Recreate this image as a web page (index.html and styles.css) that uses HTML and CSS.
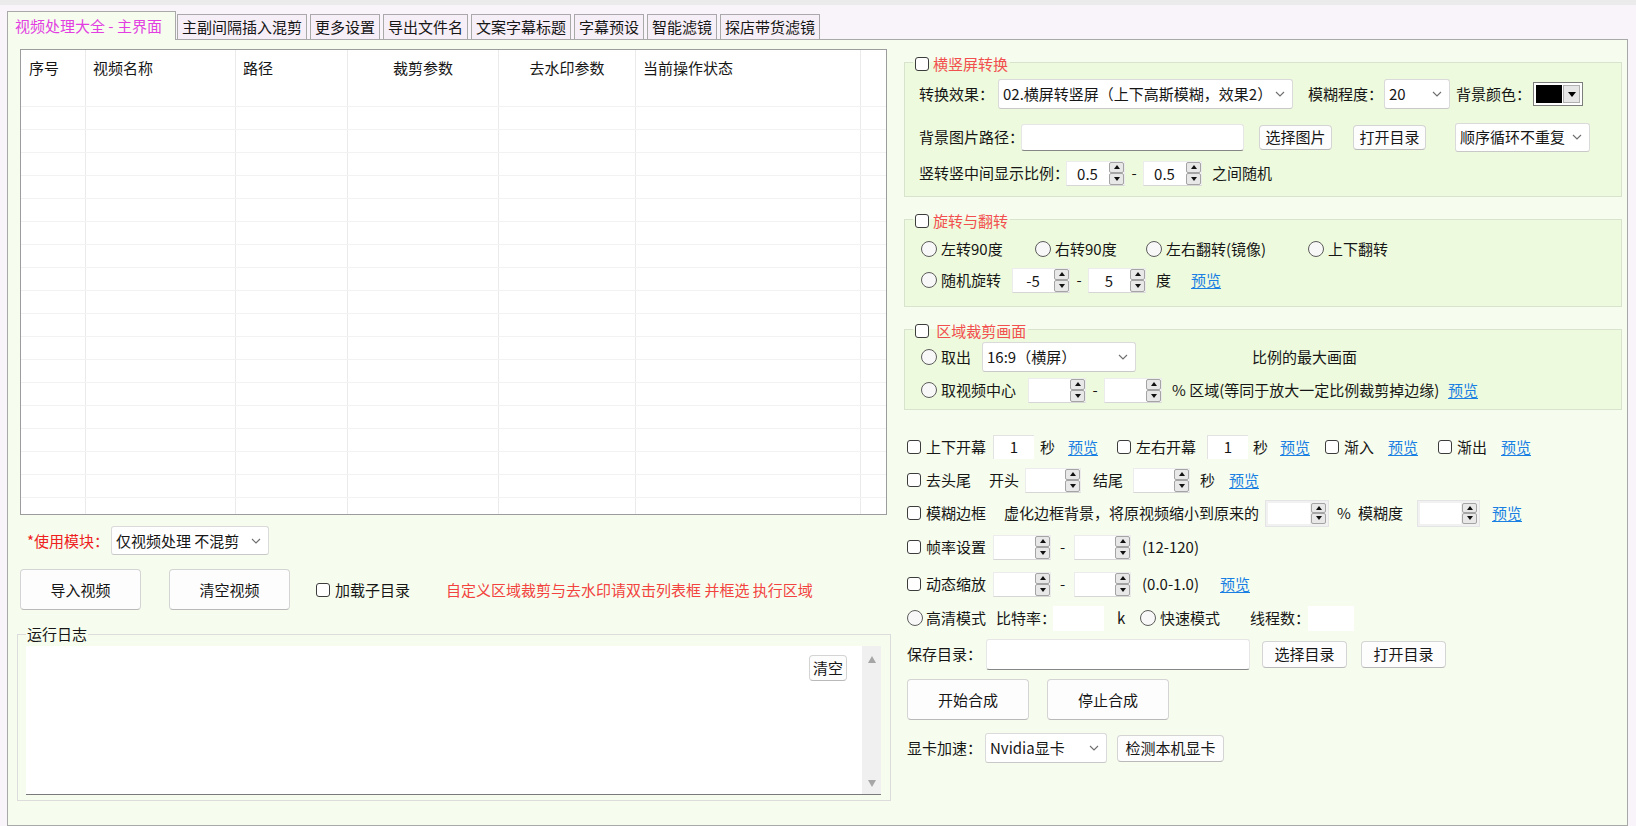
FILE: index.html
```html
<!DOCTYPE html>
<html lang="zh-CN">
<head>
<meta charset="utf-8">
<title>视频处理大全 - 主界面</title>
<link rel="stylesheet" href="styles.css">
</head>
<body>
<div class="topband"></div>
<div class="tabstrip">
  <div class="tab active">视频处理大全 - 主界面</div>
  <div class="tab">主副间隔插入混剪</div>
  <div class="tab">更多设置</div>
  <div class="tab">导出文件名</div>
  <div class="tab">文案字幕标题</div>
  <div class="tab">字幕预设</div>
  <div class="tab">智能滤镜</div>
  <div class="tab">探店带货滤镜</div>
</div>
<div class="panel">
  <div class="leftcol">
    <div class="grid">
      <div class="grow ghead"><span>序号</span><span>视频名称</span><span>路径</span><span class="c">裁剪参数</span><span class="c">去水印参数</span><span>当前操作状态</span><span></span></div>
      <div class="grow"><span></span><span></span><span></span><span></span><span></span><span></span><span></span></div>
      <div class="grow"><span></span><span></span><span></span><span></span><span></span><span></span><span></span></div>
      <div class="grow"><span></span><span></span><span></span><span></span><span></span><span></span><span></span></div>
      <div class="grow"><span></span><span></span><span></span><span></span><span></span><span></span><span></span></div>
      <div class="grow"><span></span><span></span><span></span><span></span><span></span><span></span><span></span></div>
      <div class="grow"><span></span><span></span><span></span><span></span><span></span><span></span><span></span></div>
      <div class="grow"><span></span><span></span><span></span><span></span><span></span><span></span><span></span></div>
      <div class="grow"><span></span><span></span><span></span><span></span><span></span><span></span><span></span></div>
      <div class="grow"><span></span><span></span><span></span><span></span><span></span><span></span><span></span></div>
      <div class="grow"><span></span><span></span><span></span><span></span><span></span><span></span><span></span></div>
      <div class="grow"><span></span><span></span><span></span><span></span><span></span><span></span><span></span></div>
      <div class="grow"><span></span><span></span><span></span><span></span><span></span><span></span><span></span></div>
      <div class="grow"><span></span><span></span><span></span><span></span><span></span><span></span><span></span></div>
      <div class="grow"><span></span><span></span><span></span><span></span><span></span><span></span><span></span></div>
      <div class="grow"><span></span><span></span><span></span><span></span><span></span><span></span><span></span></div>
      <div class="grow"><span></span><span></span><span></span><span></span><span></span><span></span><span></span></div>
      <div class="grow"><span></span><span></span><span></span><span></span><span></span><span></span><span></span></div>
      <div class="grow"><span></span><span></span><span></span><span></span><span></span><span></span><span></span></div>
    </div>

    <div class="modrow">
      <span class="lbl red w84">*使用模块：</span>
      <span class="sel w158 h29 modsel"><span>仅视频处理 不混剪</span><svg class="chev" viewBox="0 0 10 6"><polyline points="1,1 5,5 9,1"/></svg></span>
    </div>

    <div class="btnrow">
      <span class="btn big ml3">导入视频</span>
      <span class="btn big ml28">清空视频</span>
      <span class="copt ml26"><i class="cb"></i>加载子目录</span>
      <span class="hint ml36">自定义区域裁剪与去水印请双击列表框 并框选 执行区域</span>
    </div>

    <fieldset class="logset">
      <legend class="loglegend">运行日志</legend>
      <div class="logbox">
        <div class="logarea"><span class="btn clr">清空</span></div>
        <div class="vscroll"><i class="sup"></i><i class="sdn"></i></div>
      </div>
    </fieldset>
  </div>

  <div class="rightcol">
    <fieldset class="grp g1">
      <legend class="glegend"><span class="gin"><i class="cb"></i><span class="gtitle">横竖屏转换</span></span></legend>
      <div class="row h30 pl14 mt7">
        <span class="lbl w79">转换效果：</span>
        <span class="sel w295 h30"><span>02.横屏转竖屏（上下高斯模糊，效果2）</span><svg class="chev" viewBox="0 0 10 6"><polyline points="1,1 5,5 9,1"/></svg></span>
        <span class="lbl ml15 w76">模糊程度：</span>
        <span class="sel w66 h30"><span>20</span><svg class="chev" viewBox="0 0 10 6"><polyline points="1,1 5,5 9,1"/></svg></span>
        <span class="lbl ml6 w77">背景颜色：</span>
        <span class="cpick"><i class="swatch"></i><i class="cdrop"><b class="tri"></b></i></span>
      </div>
      <div class="row h30 pl14 mt13">
        <span class="lbl w102">背景图片路径：</span>
        <span class="inp line w223 h27"></span>
        <span class="btn ml15 w73 h25">选择图片</span>
        <span class="btn ml21 w73 h25">打开目录</span>
        <span class="sel ml29 w135 h29"><span>顺序循环不重复</span><svg class="chev" viewBox="0 0 10 6"><polyline points="1,1 5,5 9,1"/></svg></span>
      </div>
      <div class="row h26 pl14 mt8">
        <span class="lbl w147">竖转竖中间显示比例：</span>
        <span class="spin w59"><span class="sv">0.5</span><span class="sb"><i class="u"></i><i class="d"></i></span></span>
        <span class="sep w18">-</span>
        <span class="spin w59"><span class="sv">0.5</span><span class="sb"><i class="u"></i><i class="d"></i></span></span>
        <span class="lbl ml10">之间随机</span>
      </div>
    </fieldset>

    <fieldset class="grp g2">
      <legend class="glegend"><span class="gin"><i class="cb"></i><span class="gtitle">旋转与翻转</span></span></legend>
      <div class="row h26 pl16 mt7">
        <span class="ropt w114"><i class="rd"></i>左转90度</span>
        <span class="ropt w111"><i class="rd"></i>右转90度</span>
        <span class="ropt w162"><i class="rd"></i>左右翻转(镜像)</span>
        <span class="ropt"><i class="rd"></i>上下翻转</span>
      </div>
      <div class="row h26 pl16 mt5">
        <span class="ropt w91"><i class="rd"></i>随机旋转</span>
        <span class="spin w58"><span class="sv">-5</span><span class="sb"><i class="u"></i><i class="d"></i></span></span>
        <span class="sep w18">-</span>
        <span class="spin w58"><span class="sv">5</span><span class="sb"><i class="u"></i><i class="d"></i></span></span>
        <span class="lbl ml10">度</span>
        <span class="lnk ml20">预览</span>
      </div>
    </fieldset>

    <fieldset class="grp g3">
      <legend class="glegend"><span class="gin"><i class="cb"></i><span class="gtitle"> 区域裁剪画面</span></span></legend>
      <div class="row h30 pl16 mt3">
        <span class="ropt w61"><i class="rd"></i>取出</span>
        <span class="sel w154 h30"><span>16:9（横屏）</span><svg class="chev" viewBox="0 0 10 6"><polyline points="1,1 5,5 9,1"/></svg></span>
        <span class="lbl ml116">比例的最大画面</span>
      </div>
      <div class="row h26 pl16 mt5">
        <span class="ropt w107"><i class="rd"></i>取视频中心</span>
        <span class="spin w58"><span class="sv"></span><span class="sb"><i class="u"></i><i class="d"></i></span></span>
        <span class="sep w18">-</span>
        <span class="spin w58"><span class="sv"></span><span class="sb"><i class="u"></i><i class="d"></i></span></span>
        <span class="lbl ml10 w276">% 区域(等同于放大一定比例裁剪掉边缘)</span>
        <span class="lnk">预览</span>
      </div>
    </fieldset>

    <div class="row h26 pl3 mt24">
      <span class="copt w79"><i class="cb"></i>上下开幕</span>
      <span class="inp box ml7 w41 h24">1</span>
      <span class="lbl ml6 w15">秒</span>
      <span class="lnk ml13 w30">预览</span>
      <span class="copt ml19 w90"><i class="cb"></i>左右开幕</span>
      <span class="inp box w41 h24">1</span>
      <span class="lbl ml5 w15">秒</span>
      <span class="lnk ml12 w30">预览</span>
      <span class="copt ml15 w63"><i class="cb"></i>渐入</span>
      <span class="lnk w30">预览</span>
      <span class="copt ml20 w63"><i class="cb"></i>渐出</span>
      <span class="lnk">预览</span>
    </div>

    <div class="row h26 pl3 mt7">
      <span class="copt w82"><i class="cb"></i>去头尾</span>
      <span class="lbl w36">开头</span>
      <span class="spin w56"><span class="sv"></span><span class="sb"><i class="u"></i><i class="d"></i></span></span>
      <span class="lbl ml12 w40">结尾</span>
      <span class="spin w57"><span class="sv"></span><span class="sb"><i class="u"></i><i class="d"></i></span></span>
      <span class="lbl ml10 w29">秒</span>
      <span class="lnk">预览</span>
    </div>

    <div class="row h28 pl3 mt6">
      <span class="copt w97"><i class="cb"></i>模糊边框</span>
      <span class="lbl w261">虚化边框背景，将原视频缩小到原来的</span>
      <span class="spin framed w64"><span class="sv"></span><span class="sb"><i class="u"></i><i class="d"></i></span></span>
      <span class="lbl ml8 w21">%</span>
      <span class="lbl w59">模糊度</span>
      <span class="spin framed w63"><span class="sv"></span><span class="sb"><i class="u"></i><i class="d"></i></span></span>
      <span class="lnk ml12">预览</span>
    </div>

    <div class="row h26 pl3 mt7">
      <span class="copt w86"><i class="cb"></i>帧率设置</span>
      <span class="spin w58"><span class="sv"></span><span class="sb"><i class="u"></i><i class="d"></i></span></span>
      <span class="sep w23">-</span>
      <span class="spin w57"><span class="sv"></span><span class="sb"><i class="u"></i><i class="d"></i></span></span>
      <span class="lbl ml11">(12-120)</span>
    </div>

    <div class="row h26 pl3 mt11">
      <span class="copt w86"><i class="cb"></i>动态缩放</span>
      <span class="spin w58"><span class="sv"></span><span class="sb"><i class="u"></i><i class="d"></i></span></span>
      <span class="sep w23">-</span>
      <span class="spin w57"><span class="sv"></span><span class="sb"><i class="u"></i><i class="d"></i></span></span>
      <span class="lbl ml11 w78">(0.0-1.0)</span>
      <span class="lnk">预览</span>
    </div>

    <div class="row h26 pl3 mt8">
      <span class="ropt w89 g3px"><i class="rd"></i>高清模式</span>
      <span class="lbl w57">比特率：</span>
      <span class="inp w51 h25"></span>
      <span class="lbl ml13 w23">k</span>
      <span class="ropt w110"><i class="rd"></i>快速模式</span>
      <span class="lbl w58">线程数：</span>
      <span class="inp w46 h25"></span>
    </div>

    <div class="row h32 pl3 mt7">
      <span class="lbl w79">保存目录：</span>
      <span class="inp line w264 h31"></span>
      <span class="btn ml12 w85 h27">选择目录</span>
      <span class="btn ml14 w85 h27">打开目录</span>
    </div>

    <div class="row h41 pl3 mt9">
      <span class="btn w122 h41">开始合成</span>
      <span class="btn ml18 w122 h41">停止合成</span>
    </div>

    <div class="row h30 pl3 mt13">
      <span class="lbl w78">显卡加速：</span>
      <span class="sel w122 h30"><span>Nvidia显卡</span><svg class="chev" viewBox="0 0 10 6"><polyline points="1,1 5,5 9,1"/></svg></span>
      <span class="btn ml10 w107 h27">检测本机显卡</span>
    </div>
  </div>
</div>
</body>
</html>
```

FILE: styles.css
```css
* { box-sizing: border-box; }
html, body { margin: 0; padding: 0; }
body {
  width: 1636px;
  height: 826px;
  overflow: hidden;
  background: #f9f4fa;
  font-family: "Noto Sans CJK SC", "Noto Sans", sans-serif;
  font-size: 15px;
  line-height: 20px;
  color: #161616;
}

.topband { height: 5px; background: #ebebeb; }

.tabstrip {
  height: 35px;
  margin-bottom: -1px;
  padding-left: 7px;
  display: flex;
  align-items: flex-end;
}
.tab {
  height: 25px;
  margin: 0 0 1px 3px;
  padding: 0 4px;
  border: 1px solid #a9a9a9;
  border-bottom: none;
  background: #f6eff7;
  line-height: 23px;
  white-space: nowrap;
}
.tab.active {
  position: relative;
  z-index: 1;
  width: 169px;
  height: 29px;
  margin: 0;
  padding-left: 7px;
  background: #f6fdee;
  color: #e23ee2;
  line-height: 27px;
}
.tab.active + .tab { margin-left: 1px; }

.panel {
  width: 1621px;
  height: 787px;
  margin-left: 7px;
  padding-left: 9px;
  border: 1px solid #a9a9a9;
  background: #f6fdee;
  display: flex;
}
.leftcol { width: 874px; padding-top: 9px; flex-shrink: 0; }
.rightcol { width: 718px; margin-left: 13px; padding-top: 12px; flex-shrink: 0; }

/* list grid */
.grid {
  width: 867px;
  height: 466px;
  margin-left: 3px;
  border: 1px solid #9c9c9c;
  background: #fff;
  overflow: hidden;
}
.grow {
  display: grid;
  grid-template-columns: 65px 150px 112px 151px 137px 225px 1fr;
  height: 23px;
  border-bottom: 1px solid #f2f2f2;
}
.grow > span { border-right: 1px solid #ebebeb; }
.grow > span:last-child { border-right: none; }
.ghead { height: 57px; }
.ghead > span { line-height: 36px; padding-left: 7px; white-space: nowrap; }
.ghead > span:first-child { padding-left: 8px; }
.ghead > span.c { padding-left: 0; text-align: center; }

/* left controls */
.modrow {
  height: 29px;
  margin-top: 11px;
  padding-left: 10px;
  display: flex;
  align-items: center;
}
.modsel { padding-left: 5px; }
.btnrow {
  height: 41px;
  margin-top: 14px;
  display: flex;
  align-items: center;
}
.btn.big { width: 121px; height: 41px; }
.hint { color: #f2433f; white-space: nowrap; }

fieldset { margin: 0; padding: 0; min-width: 0; }
.logset {
  width: 874px;
  margin-top: 14px;
  padding-bottom: 5px;
  border: 1px solid #dcdcdc;
}
.loglegend {
  height: 20px;
  line-height: 20px;
  margin-left: 8px;
  padding: 0 1px;
}
.logbox {
  width: 855px;
  height: 149px;
  margin: 2px 0 0 8px;
  background: #fff;
  border-bottom: 1px solid #7a7a7a;
  display: flex;
}
.logarea {
  flex: 1;
  padding: 9px 15px 0 0;
  display: flex;
  justify-content: flex-end;
  align-items: flex-start;
}
.btn.clr { width: 38px; height: 26px; }
.vscroll {
  width: 19px;
  background: #f0f0f0;
  padding: 10px 0 7px;
  display: flex;
  flex-direction: column;
  justify-content: space-between;
  align-items: center;
}
.sup, .sdn { width: 0; height: 0; border-left: 4px solid transparent; border-right: 4px solid transparent; }
.sup { border-bottom: 7px solid #a6a6a6; }
.sdn { border-top: 7px solid #a6a6a6; }

/* right groups */
.grp {
  width: 718px;
  border: 1px solid #d8e3cd;
  background: #eefadd;
}
.g1 { padding-bottom: 10px; }
.g2 { margin-top: 12px; padding-bottom: 13px; }
.g3 { margin-top: 12px; padding-bottom: 6px; }
.glegend {
  height: 20px;
  margin-left: 8px;
  padding: 0 2px;
}
.gin {
  height: 16px;
  margin-top: 4px;
  display: flex;
  align-items: center;
  line-height: 16px;
}
.gtitle { margin-left: 4px; color: #f24f4f; white-space: pre; }

.row { display: flex; align-items: center; white-space: nowrap; }

/* primitives */
.lbl { flex-shrink: 0; white-space: nowrap; }
.red { color: #ee2020; }
.lnk { flex-shrink: 0; color: #1a7fe3; text-decoration: underline; text-underline-offset: 2px; }
.sep { flex-shrink: 0; text-align: center; }

.cb {
  width: 14px;
  height: 14px;
  flex-shrink: 0;
  border: 1px solid #3c3c3c;
  border-radius: 3px;
  background: #fff;
}
.rd {
  width: 16px;
  height: 16px;
  flex-shrink: 0;
  border: 1px solid #5c5c5c;
  border-radius: 50%;
  background: #f8f8f8;
}
.copt, .ropt { display: flex; align-items: center; flex-shrink: 0; }
.copt { gap: 5px; }
.ropt { gap: 4px; }
.ropt.g3px { gap: 3px; }

.sel {
  flex-shrink: 0;
  display: flex;
  align-items: center;
  justify-content: space-between;
  padding: 0 7px 0 4px;
  background: #fff;
  border: 1px solid #dadada;
  border-bottom-color: #c8c8c8;
  border-radius: 3px;
}
.chev { width: 10px; height: 6px; flex-shrink: 0; }
.chev polyline { fill: none; stroke: #6e6e6e; stroke-width: 1.1; }

.btn {
  flex-shrink: 0;
  display: flex;
  align-items: center;
  justify-content: center;
  background: #fdfdfd;
  border: 1px solid #d4d4d4;
  border-bottom-color: #b9b9b9;
  border-radius: 4px;
}

.inp { flex-shrink: 0; background: #fff; text-align: center; line-height: 22px; }
.inp.line { border: 1px solid #e6e6e6; border-bottom-color: #868686; border-radius: 3px; }
.inp.box { border-top: 1px solid #e2e2e2; border-left: 1px solid #e2e2e2; }

.spin {
  flex-shrink: 0;
  height: 25px;
  display: flex;
  background: #fff;
  border: 1px solid #ececec;
  border-bottom-color: #d6d6d6;
}
.spin.framed { height: 27px; background: #f1f1f1; border-color: #e4e4e4; padding: 2px; }
.spin .sv { flex: 1; text-align: center; line-height: 23px; background: #fff; }
.spin.framed .sv { line-height: 21px; }
.spin .sb {
  width: 15px;
  margin-left: 1px;
  display: flex;
  flex-direction: column;
}
.spin .sb i {
  flex: 1;
  display: flex;
  align-items: center;
  justify-content: center;
  background: #e8e8e8;
  border: 1px solid #a4a4a4;
  border-radius: 2px;
}
.spin .sb i::after {
  content: "";
  width: 0;
  height: 0;
  border-left: 3px solid transparent;
  border-right: 3px solid transparent;
}
.spin .sb i.u::after { border-bottom: 4px solid #111; }
.spin .sb i.d::after { border-top: 4px solid #111; }

.cpick {
  flex-shrink: 0;
  width: 50px;
  height: 24px;
  padding: 2px;
  display: flex;
  align-items: center;
  justify-content: space-between;
  background: #fff;
  border: 1px solid #7d7d7d;
}
.swatch { width: 26px; height: 18px; background: #000; }
.cdrop {
  width: 17px;
  height: 18px;
  display: flex;
  align-items: center;
  justify-content: center;
  background: #e6e6e6;
  border: 1px solid #b0b0b0;
}
.tri { width: 0; height: 0; border-left: 4px solid transparent; border-right: 4px solid transparent; border-top: 5px solid #000; }

/* sizes */
.h24 { height: 24px; } .h25 { height: 25px; } .h26 { height: 26px; } .h27 { height: 27px; }
.h28 { height: 28px; } .h29 { height: 29px; } .h30 { height: 30px; } .h31 { height: 31px; }
.h32 { height: 32px; } .h41 { height: 41px; }

.w15 { width: 15px; } .w18 { width: 18px; } .w21 { width: 21px; } .w23 { width: 23px; }
.w29 { width: 29px; } .w30 { width: 30px; } .w36 { width: 36px; } .w40 { width: 40px; }
.w41 { width: 41px; } .w46 { width: 46px; } .w51 { width: 51px; } .w56 { width: 56px; }
.w57 { width: 57px; } .w58 { width: 58px; } .w59 { width: 59px; } .w61 { width: 61px; }
.w63 { width: 63px; } .w64 { width: 64px; } .w66 { width: 66px; } .w73 { width: 73px; }
.w76 { width: 76px; } .w77 { width: 77px; } .w78 { width: 78px; } .w79 { width: 79px; }
.w82 { width: 82px; } .w84 { width: 84px; } .w85 { width: 85px; } .w86 { width: 86px; }
.w89 { width: 89px; } .w90 { width: 90px; } .w91 { width: 91px; } .w97 { width: 97px; }
.w102 { width: 102px; } .w107 { width: 107px; } .w110 { width: 110px; } .w111 { width: 111px; }
.w114 { width: 114px; } .w122 { width: 122px; } .w135 { width: 135px; } .w147 { width: 147px; }
.w154 { width: 154px; } .w158 { width: 158px; } .w162 { width: 162px; } .w223 { width: 223px; }
.w261 { width: 261px; } .w264 { width: 264px; } .w276 { width: 276px; } .w295 { width: 295px; }

.ml3 { margin-left: 3px; } .ml5 { margin-left: 5px; } .ml6 { margin-left: 6px; } .ml7 { margin-left: 7px; }
.ml8 { margin-left: 8px; } .ml10 { margin-left: 10px; } .ml11 { margin-left: 11px; } .ml12 { margin-left: 12px; }
.ml13 { margin-left: 13px; } .ml14 { margin-left: 14px; } .ml15 { margin-left: 15px; } .ml18 { margin-left: 18px; }
.ml19 { margin-left: 19px; } .ml20 { margin-left: 20px; } .ml21 { margin-left: 21px; } .ml26 { margin-left: 26px; }
.ml28 { margin-left: 28px; } .ml29 { margin-left: 29px; } .ml36 { margin-left: 36px; } .ml116 { margin-left: 116px; }

.pl3 { padding-left: 3px; } .pl14 { padding-left: 14px; } .pl16 { padding-left: 16px; }

.mt3 { margin-top: 3px; } .mt5 { margin-top: 5px; } .mt6 { margin-top: 6px; } .mt7 { margin-top: 7px; }
.mt8 { margin-top: 8px; } .mt9 { margin-top: 9px; } .mt11 { margin-top: 11px; } .mt13 { margin-top: 13px; }
.mt24 { margin-top: 24px; }
```
